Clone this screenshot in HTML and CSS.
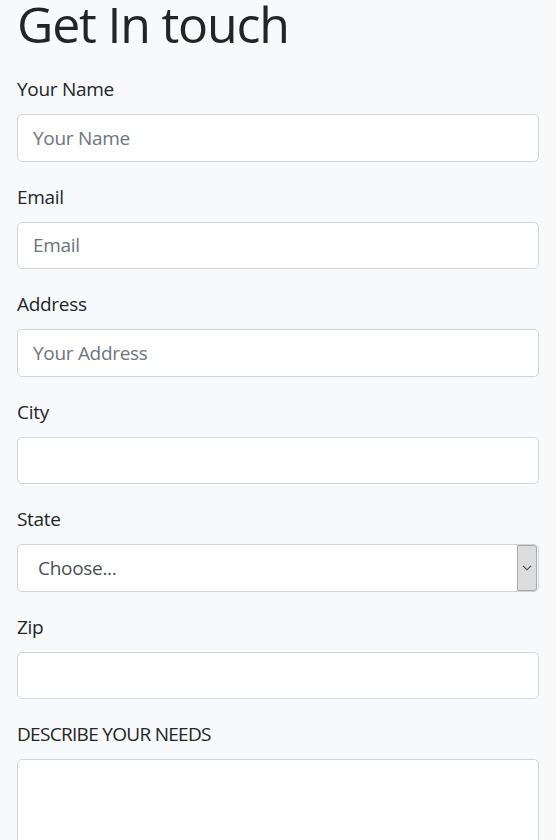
FILE: index.html
```html
<!DOCTYPE html>
<html lang="en">
<head>
<meta charset="utf-8">
<title>Get In touch</title>
<link rel="stylesheet" href="styles.css">
</head>
<body>
<main class="page">
  <h1 class="title">Get In touch</h1>
  <form class="form">
    <div class="group">
      <label class="label" for="name">Your Name</label>
      <input class="control" id="name" type="text" placeholder="Your Name">
    </div>
    <div class="group">
      <label class="label" for="email">Email</label>
      <input class="control" id="email" type="email" placeholder="Email">
    </div>
    <div class="group">
      <label class="label" for="address">Address</label>
      <input class="control" id="address" type="text" placeholder="Your Address">
    </div>
    <div class="group">
      <label class="label" for="city">City</label>
      <input class="control" id="city" type="text">
    </div>
    <div class="group">
      <label class="label" for="state">State</label>
      <div class="select-wrap">
        <select class="control select" id="state">
          <option>Choose...</option>
        </select>
        <span class="select-btn" aria-hidden="true">
          <svg width="10" height="6" viewBox="0 0 10 6"><path d="M1 0.8 L5 4.8 L9 0.8" fill="none" stroke="#444" stroke-width="1.1"/></svg>
        </span>
      </div>
    </div>
    <div class="group">
      <label class="label" for="zip">Zip</label>
      <input class="control" id="zip" type="text">
    </div>
    <div class="group">
      <label class="label label-caps" for="needs">DESCRIBE YOUR NEEDS</label>
      <textarea class="control area" id="needs"></textarea>
    </div>
  </form>
</main>
</body>
</html>
```
FILE: styles.css
```css
html, body {
  margin: 0;
  padding: 0;
  background: #f8f9fa;
}
body {
  font-family: "Open Sans", "Noto Sans", sans-serif;
  color: #212529;
  font-size: 20px;
  line-height: 30px;
  overflow: hidden;
  height: 840px;
}
.page {
  padding: 0 17px;
}
.title {
  font-size: 50px;
  font-weight: 400;
  line-height: 48px;
  margin: 0 0 26px;
  letter-spacing: -1.2px;
}
.form {
  display: flex;
  flex-direction: column;
}
.group {
  display: flex;
  flex-direction: column;
  margin-bottom: 20px;
}
.label {
  display: block;
  margin-bottom: 10px;
  font-size: 19px;
  letter-spacing: -0.3px;
}
.label-caps {
  letter-spacing: -0.7px;
}
.control {
  box-sizing: border-box;
  width: 100%;
  height: 47.5px;
  padding: 7.5px 15px;
  font-family: inherit;
  font-size: 19px;
  line-height: 30px;
  color: #495057;
  background: #fff;
  border: 1px solid #ced4da;
  border-radius: 5px;
  margin: 0;
  letter-spacing: -0.3px;
}
.control::placeholder {
  color: #6c757d;
  opacity: 1;
}
.select-wrap {
  position: relative;
}
.select {
  appearance: none;
  -webkit-appearance: none;
  padding-left: 20px;
}
.select-btn {
  position: absolute;
  top: 1px;
  bottom: 1px;
  right: 2px;
  width: 20px;
  box-sizing: border-box;
  background: #dddddd;
  border: 1px solid #a8a8a8;
  border-radius: 0 3px 3px 0;
  display: flex;
  align-items: center;
  justify-content: center;
}
.area {
  height: 150px;
  resize: none;
}
```
